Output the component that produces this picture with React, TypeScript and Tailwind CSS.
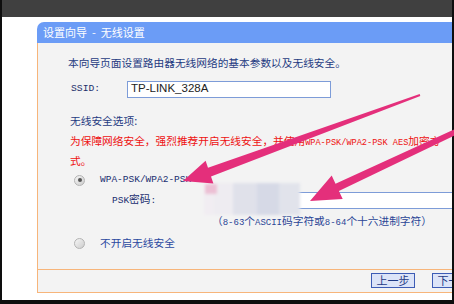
import React from 'react';

const cjk = "font-['Noto_Sans_CJK_SC',sans-serif]";
const mono = "font-['Liberation_Mono','Noto_Sans_CJK_SC',monospace]";

const Radio = ({ checked }: { checked?: boolean }) => (
  <span className="w-[11px] h-[11px] shrink-0 rounded-full border border-[#b3b3b3] bg-linear-to-br from-[#f6f6f6] to-[#cdcdcd] flex items-center justify-center">
    {checked && <span className="w-[4px] h-[4px] rounded-full bg-[#555]" />}
  </span>
);

// pink annotation arrows + mosaic patch drawn over the screenshot
const Overlay = () => (
  <svg className="absolute inset-0 pointer-events-none" width={454} height={304} viewBox="0 0 454 304">
    <defs>
      <filter id="soft" x="-20%" y="-20%" width="140%" height="140%">
        <feGaussianBlur stdDeviation="1.6" />
      </filter>
    </defs>
    <g filter="url(#soft)">
      <rect x={204} y={183} width={12} height={32} fill="#f1edf2" />
      <rect x={214} y={183} width={20} height={32} fill="#eeecf1" />
      <rect x={233} y={183} width={25} height={32} fill="#e0e1ea" />
      <rect x={257} y={183} width={23} height={32} fill="#d6d9e6" />
      <rect x={279} y={183} width={21} height={32} fill="#e1e3eb" />
      <rect x={205} y={184} width={12} height={10} fill="#ecbfd4" />
    </g>
    <polygon
      fill="#e42f7b"
      points="420.3,96 419.7,94 208,167.8 205.6,160.8 183,181 213.4,183.4 211,176.4"
    />
    <polygon
      fill="#e42f7b"
      points="474.1,126 471.9,121.4 335.5,183.7 331.7,175.5 310,201 342.7,199.1 338.9,190.9"
    />
  </svg>
);

export default function App() {
  return (
    <div className={`relative w-[454px] h-[304px] overflow-hidden bg-[#0e0e0e] px-[2px] pb-[4px] ${cjk}`}>
      <div className="h-full bg-white flex flex-col overflow-hidden">
        <div className="h-[17px] shrink-0 bg-[#404040]" />
        <div className="pl-[35px] pt-[5px]">
          <div className="w-[440px] rounded-tl-[7px] overflow-hidden">
            {/* header */}
            <div className="h-[21px] bg-[#6b9cf6] flex items-center pl-[6px] text-white text-[11px] leading-none whitespace-pre">
              设置向导  -  无线设置
            </div>

            {/* body */}
            <div className="h-[226px] bg-[#f3f3f3] border-l border-[#f7b57a] pt-[11px] flex flex-col text-[10.7px] text-[#1f3b82]">
              <div className="h-[18px] flex items-center ml-[30px]">
                本向导页面设置路由器无线网络的基本参数以及无线安全。
              </div>

              <div className="h-[18px] flex items-center ml-[33px] mt-[8px]">
                <span className={`w-[56px] text-[9.7px] text-[#1c2f6a] ${mono}`}>SSID:</span>
                <div className="w-[204px] h-[17px] bg-white border border-[#7d9cd8] flex items-center pl-[3px] text-[11.5px] text-[#222] font-['Liberation_Sans',sans-serif]">
                  TP-LINK_328A
                </div>
              </div>

              <div className="h-[18px] flex items-center ml-[32px] mt-[14px]">无线安全选项:</div>

              <div className="ml-[32px] mt-[2px] leading-[17px] text-[#ee1111] whitespace-nowrap">
                为保障网络安全，强烈推荐开启无线安全，并使用
                <span className={`text-[8.6px] ${mono}`}>WPA-PSK/WPA2-PSK AES</span>
                加密方
                <br />
                式。
              </div>

              <div className="h-[18px] flex items-center ml-[36px] mt-[2px]">
                <Radio checked />
                <span className={`ml-[15px] text-[9.5px] text-[#1a2f70] ${mono}`}>WPA-PSK/WPA2-PSK</span>
              </div>

              <div className="h-[18px] flex items-center ml-[74px] mt-[2px]">
                <span className="w-[98px] text-[#1a2f70]">
                  <span className={`text-[9.5px] ${mono}`}>PSK</span>密码<span className={`text-[9.5px] ${mono}`}>:</span>
                </span>
                <div className="w-[260px] h-[17px] bg-white border border-[#7d9cd8]" />
              </div>

              <div className="h-[18px] leading-[18px] ml-[174px] mt-[3px] text-[#2a4596] whitespace-nowrap">
                （<span className={`text-[9px] ${mono}`}>8-63</span>个<span className={`text-[9px] ${mono}`}>ASCII</span>码字符或<span className={`text-[9px] ${mono}`}>8-64</span>个十六进制字符）
              </div>

              <div className="h-[18px] flex items-center ml-[36px] mt-[4px]">
                <Radio />
                <span className="ml-[15px] text-[#2a48a0]">不开启无线安全</span>
              </div>
            </div>

            {/* footer */}
            <div className="h-[24px] bg-[#f3f3f3] border-l border-t border-b border-[#f7b57a] flex items-start pl-[333px] pt-[3px] gap-[17px]">
              <button className="w-[44px] h-[15px] shrink-0 bg-[#dce4f8] border border-[#3d5cb5] text-[#1f3a85] text-[11px] leading-none flex items-center justify-center">
                上一步
              </button>
              <button className="w-[44px] h-[15px] shrink-0 bg-[#dce4f8] border border-[#3d5cb5] text-[#1f3a85] text-[11px] leading-none flex items-center justify-center">
                下一步
              </button>
            </div>
          </div>
        </div>
      </div>
      <Overlay />
    </div>
  );
}
